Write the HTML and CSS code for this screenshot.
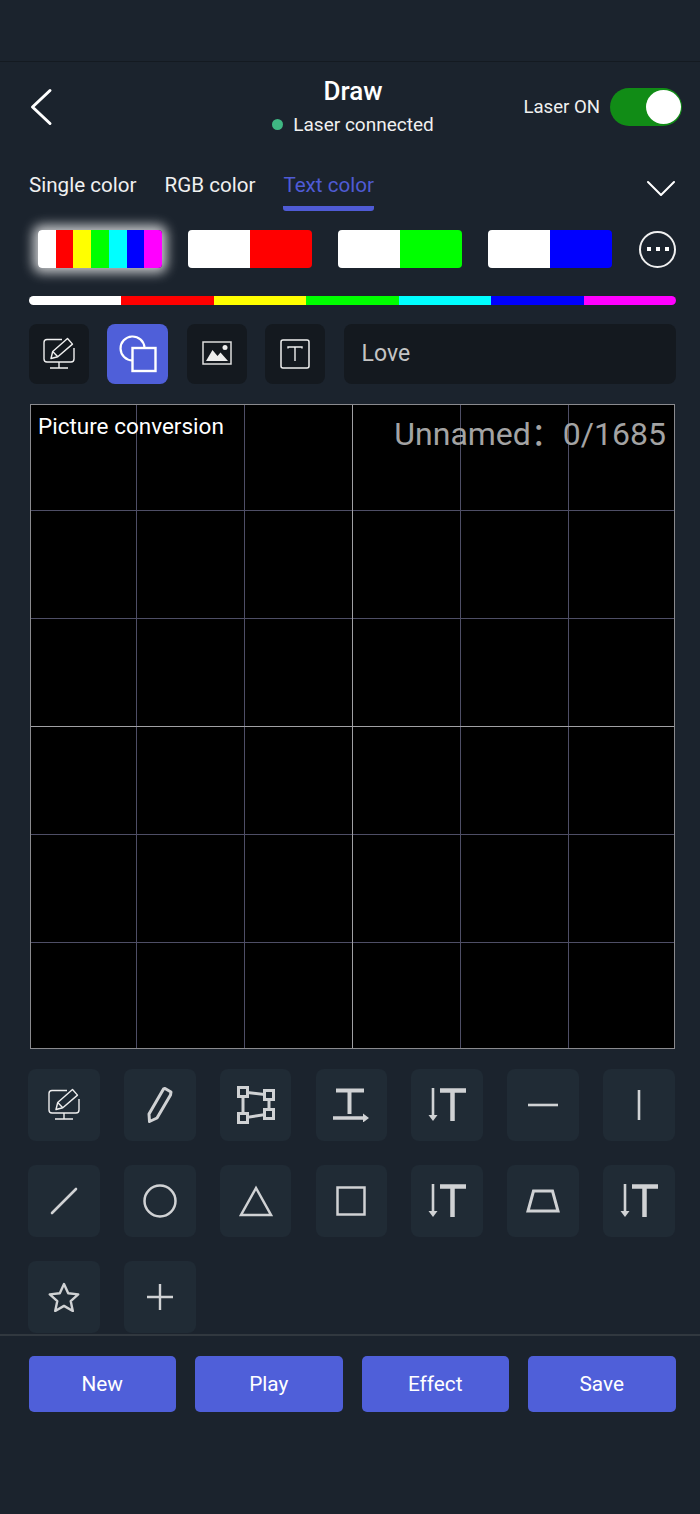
FILE: index.html
```html
<!DOCTYPE html>
<html>
<head>
    <meta charset="utf-8">
    <title>Draw</title>
    <link rel="stylesheet" href="styles.css">
</head>
<body>
    <svg class="defs" width="0" height="0">
        <symbol id="i-monitor" viewBox="0 0 34 34">
            <path d="M20 2.500H5a3 3 0 0 0-3 3V22a3 3 0 0 0 3 3h24a3 3 0 0 0 3-3V11M17 25v5.500M8 31h18" fill="none" stroke="currentColor" stroke-width="1.400"/>
            <path d="M9 21.500l1.700-7L25.500 1.500l5 5.600-14.700 12.600zM10.700 14.500l5.100 5.200" fill="none" stroke="currentColor" stroke-width="1.400" stroke-linejoin="round"/>
        </symbol>
        <symbol id="i-t-down" viewBox="0 0 38 34">
            <path d="M5 0v28" stroke="currentColor" stroke-width="2.600"/>
            <path d="M.5 27h9L5 33z" fill="currentColor"/>
            <path d="M12 2.500h26M24.500 2.500V33" fill="none" stroke="currentColor" stroke-width="4.500"/>
        </symbol>
    </svg>

    <div class="status-bar"></div>

    <header class="header">
        <svg class="back" width="24" height="38" viewBox="0 0 24 38"><path d="M21 2.500L3.500 19 21 35.500" fill="none" stroke="#fff" stroke-width="3" stroke-linecap="round" stroke-linejoin="round"/></svg>
        <div class="title-box">
            <h1>Draw</h1>
            <div class="conn"><span class="dot"></span>Laser connected</div>
        </div>
        <div class="laser">
            <span>Laser ON</span>
            <div class="switch"><span class="knob"></span></div>
        </div>
    </header>

    <nav class="tabs">
        <a class="tab">Single color</a>
        <a class="tab">RGB color</a>
        <a class="tab active">Text color</a>
        <svg class="chev" width="30" height="16" viewBox="0 0 30 16"><path d="M2 2l13 13L28 2" fill="none" stroke="#fff" stroke-width="2" stroke-linecap="round" stroke-linejoin="round"/></svg>
    </nav>

    <div class="swatches">
        <div class="swatch glow">
            <i class="c-white"></i><i class="c-red"></i><i class="c-yellow"></i><i class="c-green"></i><i class="c-cyan"></i><i class="c-blue"></i><i class="c-magenta"></i>
        </div>
        <div class="swatch"><i class="c-white"></i><i class="c-red"></i></div>
        <div class="swatch"><i class="c-white"></i><i class="c-green"></i></div>
        <div class="swatch"><i class="c-white"></i><i class="c-blue"></i></div>
        <div class="more"><b></b><b></b><b></b></div>
    </div>

    <div class="colorbar">
        <i class="c-white"></i><i class="c-red"></i><i class="c-yellow"></i><i class="c-green"></i><i class="c-cyan"></i><i class="c-blue"></i><i class="c-magenta"></i>
    </div>

    <div class="modes">
        <button class="mode">
            <svg width="34" height="34"><use href="#i-monitor"/></svg>
        </button>
        <button class="mode on">
            <svg width="38" height="38" viewBox="0 0 38 38">
                <path d="M13.500 25.500a12 12 0 1 1 12-13" fill="none" stroke="#fff" stroke-width="2.200"/>
                <rect x="13.500" y="13" width="23" height="23" fill="none" stroke="#fff" stroke-width="2.400"/>
            </svg>
        </button>
        <button class="mode">
            <svg width="30" height="26" viewBox="0 0 30 26">
                <rect x="1" y="1" width="28" height="22" fill="none" stroke="#ddd" stroke-width="1.500"/>
                <path d="M4 20l6.500-11 5 6 3-3.500L26 20z" fill="#eee"/>
                <circle cx="23" cy="6.500" r="2.500" fill="#eee"/>
            </svg>
        </button>
        <button class="mode">
            <svg width="30" height="30" viewBox="0 0 30 30">
                <rect x="1" y="1" width="28" height="28" rx="2" fill="none" stroke="#f0f0f0" stroke-width="1.500"/>
                <path d="M8 9.500V8h14v1.500M15 8v14" fill="none" stroke="#f0f0f0" stroke-width="1.400"/>
            </svg>
        </button>
        <div class="text-input">Love</div>
    </div>

    <section class="canvas">
        <span class="cv-label">Picture conversion</span>
        <span class="cv-count">Unnamed：0/1685</span>
    </section>

    <div class="tools">
        <div class="tool bright"><svg width="34" height="34"><use href="#i-monitor"/></svg></div>
        <div class="tool">
            <svg width="26" height="38" viewBox="0 0 26 38"><path d="M18 2.500l6 3.500-.5 3L10 32l-7.500 3.500L2 28 16.500 3z" fill="none" stroke="currentColor" stroke-width="3" stroke-linejoin="round"/></svg>
        </div>
        <div class="tool">
            <svg width="38" height="39" viewBox="0 0 38 39">
                <path d="M6 6l26 3v19L6 32z" fill="none" stroke="currentColor" stroke-width="3"/>
                <g fill="#202b35" stroke="currentColor" stroke-width="3">
                    <rect x="1.500" y="1.500" width="9" height="9"/><rect x="27.500" y="4.500" width="9" height="9"/><rect x="27.500" y="23.500" width="9" height="9"/><rect x="1.500" y="27.500" width="9" height="9"/>
                </g>
            </svg>
        </div>
        <div class="tool">
            <svg width="36" height="34" viewBox="0 0 36 34">
                <path d="M3 2.500h28M16.500 2.500V26" fill="none" stroke="currentColor" stroke-width="4"/>
                <path d="M0 30h31" stroke="currentColor" stroke-width="3.500"/>
                <path d="M30 25.500l6 4.500-6 4.500z" fill="currentColor"/>
            </svg>
        </div>
        <div class="tool"><svg width="38" height="34"><use href="#i-t-down"/></svg></div>
        <div class="tool"><svg width="30" height="4" viewBox="0 0 30 4"><path d="M0 2h30" stroke="currentColor" stroke-width="2.600"/></svg></div>
        <div class="tool"><svg width="4" height="30" viewBox="0 0 4 30"><path d="M2 0v30" stroke="currentColor" stroke-width="2.600"/></svg></div>

        <div class="tool"><svg width="28" height="28" viewBox="0 0 28 28"><path d="M2 26L26 2" stroke="currentColor" stroke-width="2.600" stroke-linecap="round"/></svg></div>
        <div class="tool"><svg width="34" height="34" viewBox="0 0 34 34"><circle cx="17" cy="17" r="15.500" fill="none" stroke="currentColor" stroke-width="2.500"/></svg></div>
        <div class="tool"><svg width="34" height="32" viewBox="0 0 34 32"><path d="M17 3L2 30h30z" fill="none" stroke="currentColor" stroke-width="2.500"/></svg></div>
        <div class="tool"><svg width="30" height="30" viewBox="0 0 30 30"><rect x="1.500" y="1.500" width="27" height="27" fill="none" stroke="currentColor" stroke-width="2.500"/></svg></div>
        <div class="tool"><svg width="38" height="34"><use href="#i-t-down"/></svg></div>
        <div class="tool"><svg width="34" height="24" viewBox="0 0 34 24"><path d="M7.500 2h19L32 22H2z" fill="none" stroke="currentColor" stroke-width="3"/></svg></div>
        <div class="tool"><svg width="38" height="34"><use href="#i-t-down"/></svg></div>

        <div class="tool"><svg width="32" height="30" viewBox="0 0 32 30"><path d="M16 2l4.200 9.300 10 1.100-7.500 6.700 2.100 9.900L16 23.900 7.200 29l2.100-9.900L1.800 12.400l10-1.100z" fill="none" stroke="currentColor" stroke-width="2.400" stroke-linejoin="round"/></svg></div>
        <div class="tool"><svg width="26" height="26" viewBox="0 0 26 26"><path d="M0 13h26M13 0v26" stroke="currentColor" stroke-width="2.400"/></svg></div>
    </div>

    <footer class="footer">
        <button class="action">New</button>
        <button class="action">Play</button>
        <button class="action">Effect</button>
        <button class="action">Save</button>
    </footer>
</body>
</html>
```

FILE: styles.css
```css
* {
    box-sizing: border-box;
}
html, body {
    margin: 0;
    padding: 0;
}
body {
    width: 700px;
    height: 1514px;
    overflow: hidden;
    background-color: #1b232d;
    font-family: Roboto, "Liberation Sans", sans-serif;
    color: #fff;
}
.defs {
    display: block;
    height: 0;
}
.status-bar {
    height: 62px;
    border-bottom: 1px solid #141a21;
}

/* header */
.header {
    height: 88px;
    padding: 0 18px 0 29px;
    display: grid;
    grid-template-columns: 1fr auto 1fr;
    align-items: center;
}
.back {
    display: block;
    margin-top: 2px;
}
.title-box {
    text-align: center;
    margin-right: 5px;
}
h1 {
    margin: 0;
    font-size: 26px;
    line-height: 30px;
    font-weight: 500;
}
.conn {
    display: flex;
    align-items: center;
    gap: 10px;
    margin-top: 7px;
    font-size: 19px;
    line-height: 24px;
    color: #f0f0f0;
}
.dot {
    width: 11px;
    height: 11px;
    border-radius: 50%;
    background-color: #3fb883;
}
.laser {
    display: flex;
    align-items: center;
    justify-content: flex-end;
    gap: 10px;
    font-size: 18.6px;
    color: #f0f0f0;
    margin-top: 2px;
}
.switch {
    width: 72px;
    height: 38px;
    border-radius: 19px;
    background-color: #118c16;
    padding: 2px 1px;
    display: flex;
    justify-content: flex-end;
}
.knob {
    width: 35px;
    height: 34px;
    border-radius: 50%;
    background-color: #fff;
}

/* tabs */
.tabs {
    height: 68px;
    padding: 0 24px 0 29px;
    display: flex;
    gap: 28px;
    align-items: flex-start;
}
.tab {
    font-size: 20.6px;
    line-height: 24px;
    padding-top: 23px;
    padding-bottom: 9px;
    color: #f0f0f0;
    border-bottom: 5px solid transparent;
}
.tab.active {
    color: #4f5bd5;
    border-bottom-color: #4f5bd5;
    border-radius: 3px;
}
.chev {
    margin-left: auto;
    margin-top: 30px;
}

/* swatches */
.swatches {
    display: flex;
    align-items: center;
    gap: 26px;
    padding: 6px 24px 0 38px;
    height: 56px;
}
.swatch {
    width: 124px;
    height: 38px;
    border-radius: 4px;
    overflow: hidden;
    display: flex;
}
.swatch i, .colorbar i {
    flex: 1;
}
.glow {
    box-shadow: 0 0 12px 5px rgba(255, 255, 255, 0.75);
}
.c-white { background-color: #fff; }
.c-red { background-color: #f00; }
.c-yellow { background-color: #ff0; }
.c-green { background-color: #0f0; }
.c-cyan { background-color: #0ff; }
.c-blue { background-color: #00f; }
.c-magenta { background-color: #f0f; }
.more {
    width: 37px;
    height: 37px;
    margin-left: auto;
    border: 2px solid #f0f0f0;
    border-radius: 50%;
    display: flex;
    align-items: center;
    justify-content: center;
    gap: 5px;
}
.more b {
    width: 4px;
    height: 4px;
    background-color: #fff;
}

/* rainbow bar */
.colorbar {
    margin: 22px 24px 0 29px;
    height: 9px;
    border-radius: 5px;
    overflow: hidden;
    display: flex;
}

/* mode row */
.modes {
    margin-top: 19px;
    padding: 0 24px 0 29px;
    display: flex;
    gap: 18.4px;
    height: 60px;
}
.mode {
    width: 60px;
    height: 60px;
    padding: 0;
    border: none;
    border-radius: 8px;
    background-color: #14191f;
    color: #f0f0f0;
    display: flex;
    align-items: center;
    justify-content: center;
}
.mode.on {
    width: 61px;
    background-color: #4f5fd9;
}
.text-input {
    flex: 1;
    border-radius: 8px;
    background-color: #14191f;
    padding-left: 18px;
    font-size: 23px;
    line-height: 60px;
    color: #c4c4c4;
}

/* canvas */
.canvas {
    margin: 20px 0 0 30px;
    width: 645px;
    height: 645px;
    display: flex;
    justify-content: space-between;
    align-items: flex-start;
    padding: 0 8px 0 7px;
    background-color: #000;
    border: 1px solid #8a8a8e;
    background-image:
        linear-gradient(#a0a0a4, #a0a0a4),
        linear-gradient(#a0a0a4, #a0a0a4),
        repeating-linear-gradient(180deg, transparent 0, transparent 105px, #4e4e66 105px, #4e4e66 106px, transparent 106px, transparent 108px),
        repeating-linear-gradient(90deg, transparent 0, transparent 105px, #4e4e66 105px, #4e4e66 106px, transparent 106px, transparent 108px);
    background-size: 1px 100%, 100% 1px, 100% 100%, 100% 100%;
    background-position: 321px 0, 0 321px, 0 0, 0 0;
    background-repeat: no-repeat;
}
.cv-label {
    font-size: 22.5px;
    line-height: 26px;
    margin-top: 8px;
    color: #fff;
}
.cv-count {
    font-family: Roboto, "Noto Sans CJK SC", sans-serif;
    font-size: 32px;
    line-height: 38px;
    margin-top: 10px;
    color: #a3a3a3;
}

/* tool grid */
.tools {
    margin-top: 20px;
    padding-left: 28.3px;
    display: grid;
    grid-template-columns: repeat(7, 71.5px);
    grid-auto-rows: 72px;
    column-gap: 24.3px;
    row-gap: 24px;
    height: 267px;
    border-bottom: 2px solid #31383f;
}
.tool {
    border-radius: 8px;
    background-color: #202b35;
    color: #d0d2d4;
    display: flex;
    align-items: center;
    justify-content: center;
}
.tool.bright {
    color: #eee;
}

/* footer */
.footer {
    padding: 20px 24px 0 28.5px;
    display: grid;
    grid-template-columns: repeat(4, 147.5px);
    column-gap: 19px;
}
.action {
    height: 56px;
    border: none;
    border-radius: 5px;
    background-color: #4f5fd9;
    color: #fff;
    font-family: Roboto, "Liberation Sans", sans-serif;
    font-size: 20.8px;
}
```
